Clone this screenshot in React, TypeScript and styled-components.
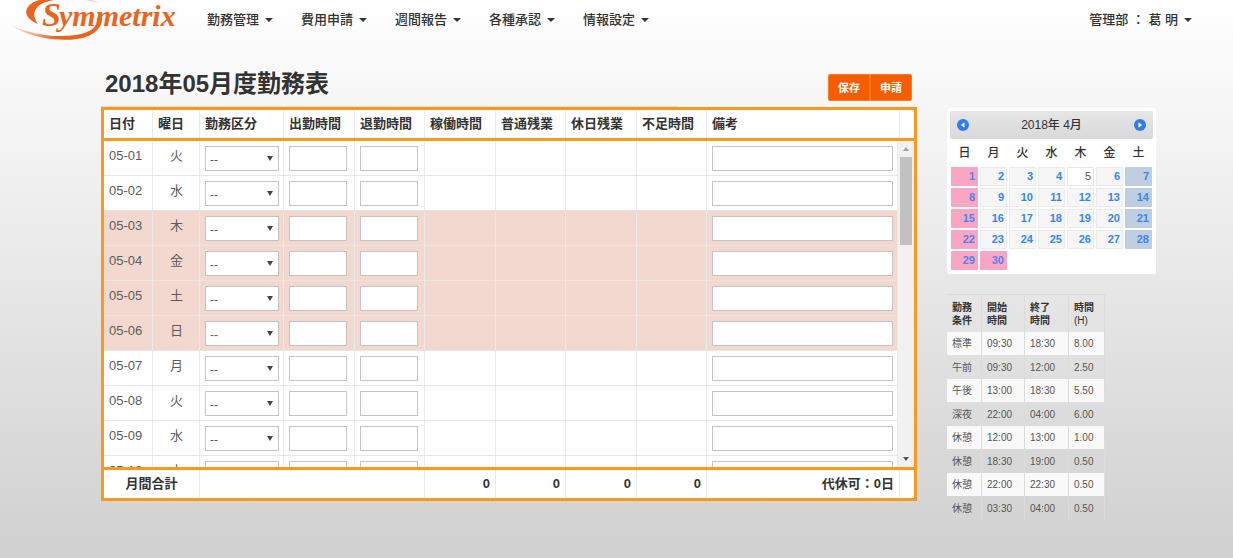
import React from 'react';
import styled, { createGlobalStyle } from 'styled-components';

const GlobalStyle = createGlobalStyle`
  * { box-sizing: border-box; }
  html { min-height: 100%; background: linear-gradient(#ffffff, #d0d0d0) no-repeat; }
  body {
    margin: 0;
    font-family: "Liberation Sans", "Noto Sans CJK JP", sans-serif;
    font-size: 13px;
    line-height: 20px;
    color: #333;
  }
  button, input, select { font: inherit; color: inherit; }
  table { border-collapse: separate; border-spacing: 0; }
`;

const Page = styled.div`
  min-height: 100vh;
`;

const NavBar = styled.header`
  display: flex;
  align-items: center;
  height: 40px;
  padding: 0 41px 0 10px;
`;

const LogoLink = styled.a`
  display: block;
  width: 197px;
  height: 42px;
  svg { display: block; overflow: visible; }
`;

const Menu = styled.nav`
  display: flex;
  flex: 1;
  gap: 28px;
`;

const MenuButton = styled.button`
  display: flex;
  align-items: center;
  gap: 6px;
  padding: 0;
  border: 0;
  background: none;
  font-weight: 500;
  white-space: nowrap;
  cursor: pointer;
  &::after {
    content: "";
    border: 4px solid transparent;
    border-top-color: #333;
    border-bottom: 0;
  }
`;

const Content = styled.div`
  display: flex;
  align-items: flex-start;
  gap: 30px;
  padding: 26px 77px 32px 101px;
`;

const Main = styled.main`
  flex: 1;
  min-width: 0;
`;

const TitleRow = styled.div`
  display: flex;
  justify-content: space-between;
  align-items: flex-start;
  padding-right: 5px;
  height: 41px;
`;

const Title = styled.h1`
  flex: 0 1 576px;
  height: 41px;
  margin: 0;
  padding-left: 4px;
  border-bottom: 1px solid #ddd;
  font-size: 24px;
  line-height: 36px;
  font-weight: 700;
  white-space: nowrap;
`;

const Actions = styled.div`
  display: flex;
  margin-top: 8px;
`;

const ActionButton = styled.button`
  width: 42px;
  height: 27px;
  padding: 0;
  border: 1px solid #ff7d1a;
  background: #f75c00;
  color: #fff;
  font-size: 11px;
  font-weight: 700;
  cursor: pointer;
  &:first-child { border-radius: 2px 0 0 2px; }
  &:last-child { border-radius: 0 2px 2px 0; }
`;

const Sheet = styled.section`
  border: 3px solid #fb981f;
  background: #fff;
`;

const SheetTable = styled.table`
  width: 100%;
  table-layout: fixed;
  th, td {
    padding: 0 5px;
    border-right: 1px solid #eaeaea;
    text-align: left;
    white-space: nowrap;
  }
`;

const HeadTable = styled(SheetTable)`
  border-bottom: 3px solid #fb981f;
  th { height: 28px; }
  th:last-child { border-right: 0; }
`;

const FootTable = styled(SheetTable)`
  border-top: 3px solid #fb981f;
  th, td { height: 28px; font-weight: 700; text-align: right; }
  th { text-align: center; }
  td:last-child { border-right: 0; }
`;

const ScrollArea = styled.div`
  display: flex;
  height: 326px;
`;

const ScrollView = styled.div`
  flex: 1;
  min-width: 0;
  overflow-y: auto;
  scrollbar-width: none;
`;

const DayTable = styled(SheetTable)`
  color: #5c5c5c;
`;

const DayRow = styled.tr<{ $off: boolean }>`
  background: ${(p) => (p.$off ? '#f2d8ce' : '#fff')};
  td {
    height: 35px;
    padding: 5px 4px 0 5px;
    border-bottom: 1px solid #e9e5e3;
    vertical-align: top;
  }
  td:nth-child(2) { text-align: center; }
`;

const fieldBox = `
  display: block;
  height: 25px;
  border: 1px solid #c4c4c4;
  border-radius: 0;
  background-color: #fff;
`;

const TextField = styled.input<{ $wide?: boolean }>`
  ${fieldBox}
  width: ${(p) => (p.$wide ? '100%' : '58px')};
  padding: 0 4px;
`;

const KindBox = styled.span`
  position: relative;
  display: block;
  &::after {
    content: "";
    position: absolute;
    top: 10px;
    right: 6px;
    border: 3px solid transparent;
    border-top: 5px solid #444;
    border-bottom: 0;
    pointer-events: none;
  }
`;

const KindSelect = styled.select`
  ${fieldBox}
  width: 100%;
  padding: 2px 4px 0;
  appearance: none;
  font-size: 12px;
`;

const ScrollRail = styled.div`
  display: flex;
  flex-direction: column;
  align-items: center;
  width: 16px;
  padding: 0 1px;
  background: #f1f1f1;
`;

const ScrollArrow = styled.span<{ $down?: boolean }>`
  display: flex;
  align-items: center;
  justify-content: center;
  height: 16px;
  margin-top: ${(p) => (p.$down ? 'auto' : '0')};
  &::before {
    content: "";
    border: 3px solid transparent;
    ${(p) =>
      p.$down
        ? 'border-top: 4px solid #555; border-bottom: 0;'
        : 'border-bottom: 4px solid #a0a0a0; border-top: 0;'}
  }
`;

const ScrollThumb = styled.span`
  width: 12px;
  height: 88px;
  background: #c1c1c1;
`;

const Aside = styled.aside`
  flex: 0 0 209px;
  margin-top: 42px;
`;

const Calendar = styled.section`
  padding: 3px 3px 3px;
  border-radius: 2px;
  background: #fff;
`;

const CalendarHead = styled.div`
  display: flex;
  align-items: center;
  justify-content: space-between;
  height: 28px;
  padding: 0 6px;
  border-radius: 2px;
  background: linear-gradient(#e6e6e6, #d9d9d9);
`;

const CalendarTitle = styled.h2`
  margin: 0;
  font-size: 12px;
  font-weight: 500;
`;

const MonthButton = styled.button`
  display: block;
  width: 14px;
  height: 14px;
  padding: 0;
  border: 0;
  background: none;
  cursor: pointer;
  svg { display: block; }
`;

const CalendarTable = styled.table`
  width: 100%;
  table-layout: fixed;
  th { height: 27px; padding: 0; font-size: 12px; font-weight: 500; }
  td { height: 21px; padding: 1px; }
`;

type DayTone = 'plain' | 'holiday' | 'saturday' | 'today';

const tones: Record<DayTone, string> = {
  plain: 'background: #f6f6f6; border-color: #ebebeb; color: #3385f5;',
  holiday: 'background: #f9a6c5; border-color: #f9a6c5; color: #5580ea;',
  saturday: 'background: #becde0; border-color: #becde0; color: #3d86ec;',
  today: 'background: #fff; border-color: #e6e6e6; color: #555; font-weight: 400;',
};

const DayLink = styled.a<{ $tone: DayTone }>`
  display: block;
  height: 19px;
  padding-right: 2px;
  border: 1px solid;
  font-size: 11px;
  line-height: 16px;
  font-weight: 700;
  text-align: right;
  text-decoration: none;
  ${(p) => tones[p.$tone]}
`;

const TermsTable = styled.table`
  width: 158px;
  margin-top: 20px;
  table-layout: fixed;
  font-size: 10px;
  line-height: 13px;
  color: #555;
  th, td {
    padding: 0 5px;
    border-right: 1px solid #dcdcdc;
    text-align: left;
    white-space: nowrap;
  }
  th { height: 38px; color: #333; border-top: 1px solid #dcdcdc; }
  tbody tr:nth-child(odd) td { height: 23px; background: #f9f9f9; }
  tbody tr:nth-child(even) td { height: 24px; }
`;

const Unit = styled.span`
  font-weight: 400;
`;

const ORANGE = '#ea6420';

function Logo() {
  return (
    <svg width="170" height="42" viewBox="10 0 170 42" role="img" aria-label="Symmetrix">
      <defs>
        <linearGradient id="swooshTop" x1="0" x2="1">
          <stop offset="0" stopColor={ORANGE} />
          <stop offset="0.5" stopColor={ORANGE} />
          <stop offset="1" stopColor={ORANGE} stopOpacity="0.15" />
        </linearGradient>
        <linearGradient id="swooshBottom" x1="0" x2="1">
          <stop offset="0" stopColor={ORANGE} stopOpacity="0.1" />
          <stop offset="0.5" stopColor={ORANGE} />
          <stop offset="1" stopColor={ORANGE} />
        </linearGradient>
      </defs>
      <path
        d="M103 5 C86 -3 54 -6 34 3 C23 9 23 19 38 25 C31 16 34 7 46 3 C60 -2 86 -1 103 5 Z"
        fill="url(#swooshTop)"
      />
      <path
        d="M11 26 C28 38 56 43 77 40 C93 38 103 29 102 18 L97 19 C98 28 90 34 76 36 C56 39 32 36 11 26 Z"
        fill="url(#swooshBottom)"
      />
      <g fill={ORANGE} fontFamily="'Liberation Serif', serif" fontStyle="italic" fontWeight="700">
        <text x="42" y="27" fontSize="34">S</text>
        <text x="59" y="27" fontSize="30">ymmetrix</text>
      </g>
    </svg>
  );
}

function MonthIcon({ next }: { next?: boolean }) {
  return (
    <svg width="14" height="14" viewBox="0 0 14 14" aria-hidden="true">
      <circle cx="7" cy="7" r="6" fill="#2f7df0" />
      <path d={next ? 'M5.5 4.2 L9 7 L5.5 9.8 Z' : 'M8.5 4.2 L5 7 L8.5 9.8 Z'} fill="#fff" />
    </svg>
  );
}

const menus = ['勤務管理', '費用申請', '週間報告', '各種承認', '情報設定'];
const columns = ['日付', '曜日', '勤務区分', '出勤時間', '退勤時間', '稼働時間', '普通残業', '休日残業', '不足時間', '備考'];
const widths = [49, 47, 84, 71, 70, 71, 70, 71, 70];
const days = ['火', '水', '木', '金', '土', '日', '月', '火', '水', '木'].map((weekday, i) => ({
  date: `05-${String(i + 1).padStart(2, '0')}`,
  weekday,
  off: i >= 2 && i <= 5,
}));
const week = ['日', '月', '火', '水', '木', '金', '土'];
const terms = [
  ['標準', '09:30', '18:30', '8.00'],
  ['午前', '09:30', '12:00', '2.50'],
  ['午後', '13:00', '18:30', '5.50'],
  ['深夜', '22:00', '04:00', '6.00'],
  ['休憩', '12:00', '13:00', '1.00'],
  ['休憩', '18:30', '19:00', '0.50'],
  ['休憩', '22:00', '22:30', '0.50'],
  ['休憩', '03:30', '04:00', '0.50'],
];

function Columns({ end }: { end?: boolean }) {
  return (
    <colgroup>
      {widths.map((w, i) => (
        <col key={i} style={{ width: w }} />
      ))}
      <col />
      {end && <col style={{ width: 14 }} />}
    </colgroup>
  );
}

function toneOf(day: number): DayTone {
  if (day % 7 === 1 || day === 30) return 'holiday';
  if (day % 7 === 0) return 'saturday';
  return day === 5 ? 'today' : 'plain';
}

export default function App() {
  return (
    <Page>
      <GlobalStyle />
      <NavBar>
        <LogoLink href="#">
          <Logo />
        </LogoLink>
        <Menu>
          {menus.map((m) => (
            <MenuButton key={m}>{m}</MenuButton>
          ))}
        </Menu>
        <MenuButton>管理部 ： 葛 明</MenuButton>
      </NavBar>
      <Content>
        <Main>
          <TitleRow>
            <Title>2018年05月度勤務表</Title>
            <Actions>
              <ActionButton>保存</ActionButton>
              <ActionButton>申請</ActionButton>
            </Actions>
          </TitleRow>
          <Sheet>
            <HeadTable>
              <Columns end />
              <thead>
                <tr>
                  {columns.map((c) => (
                    <th key={c} scope="col">{c}</th>
                  ))}
                  <th />
                </tr>
              </thead>
            </HeadTable>
            <ScrollArea>
              <ScrollView>
                <DayTable>
                  <Columns />
                  <tbody>
                    {days.map((d) => (
                      <DayRow key={d.date} $off={d.off}>
                        <td>{d.date}</td>
                        <td>{d.weekday}</td>
                        <td>
                          <KindBox>
                            <KindSelect aria-label={`${d.date} 勤務区分`}>
                              <option>--</option>
                            </KindSelect>
                          </KindBox>
                        </td>
                        <td><TextField aria-label={`${d.date} 出勤時間`} /></td>
                        <td><TextField aria-label={`${d.date} 退勤時間`} /></td>
                        <td />
                        <td />
                        <td />
                        <td />
                        <td><TextField $wide aria-label={`${d.date} 備考`} /></td>
                      </DayRow>
                    ))}
                  </tbody>
                </DayTable>
              </ScrollView>
              <ScrollRail aria-hidden="true">
                <ScrollArrow />
                <ScrollThumb />
                <ScrollArrow $down />
              </ScrollRail>
            </ScrollArea>
            <FootTable>
              <Columns end />
              <tbody>
                <tr>
                  <th colSpan={2} scope="row">月間合計</th>
                  <td colSpan={3} />
                  <td>0</td>
                  <td>0</td>
                  <td>0</td>
                  <td>0</td>
                  <td>代休可：0日</td>
                  <td />
                </tr>
              </tbody>
            </FootTable>
          </Sheet>
        </Main>
        <Aside>
          <Calendar>
            <CalendarHead>
              <MonthButton aria-label="前月"><MonthIcon /></MonthButton>
              <CalendarTitle>2018年 4月</CalendarTitle>
              <MonthButton aria-label="翌月"><MonthIcon next /></MonthButton>
            </CalendarHead>
            <CalendarTable>
              <thead>
                <tr>
                  {week.map((w) => (
                    <th key={w} scope="col">{w}</th>
                  ))}
                </tr>
              </thead>
              <tbody>
                {[0, 1, 2, 3, 4].map((r) => (
                  <tr key={r}>
                    {week.map((w, c) => {
                      const day = r * 7 + c + 1;
                      return (
                        <td key={w}>
                          {day <= 30 && <DayLink href="#" $tone={toneOf(day)}>{day}</DayLink>}
                        </td>
                      );
                    })}
                  </tr>
                ))}
              </tbody>
            </CalendarTable>
          </Calendar>
          <TermsTable>
            <colgroup>
              <col style={{ width: 35 }} />
              <col style={{ width: 43 }} />
              <col style={{ width: 44 }} />
              <col />
            </colgroup>
            <thead>
              <tr>
                <th scope="col">勤務<br />条件</th>
                <th scope="col">開始<br />時間</th>
                <th scope="col">終了<br />時間</th>
                <th scope="col">時間<br /><Unit>(H)</Unit></th>
              </tr>
            </thead>
            <tbody>
              {terms.map((row, i) => (
                <tr key={i}>
                  {row.map((v, j) => (
                    <td key={j}>{v}</td>
                  ))}
                </tr>
              ))}
            </tbody>
          </TermsTable>
        </Aside>
      </Content>
    </Page>
  );
}
